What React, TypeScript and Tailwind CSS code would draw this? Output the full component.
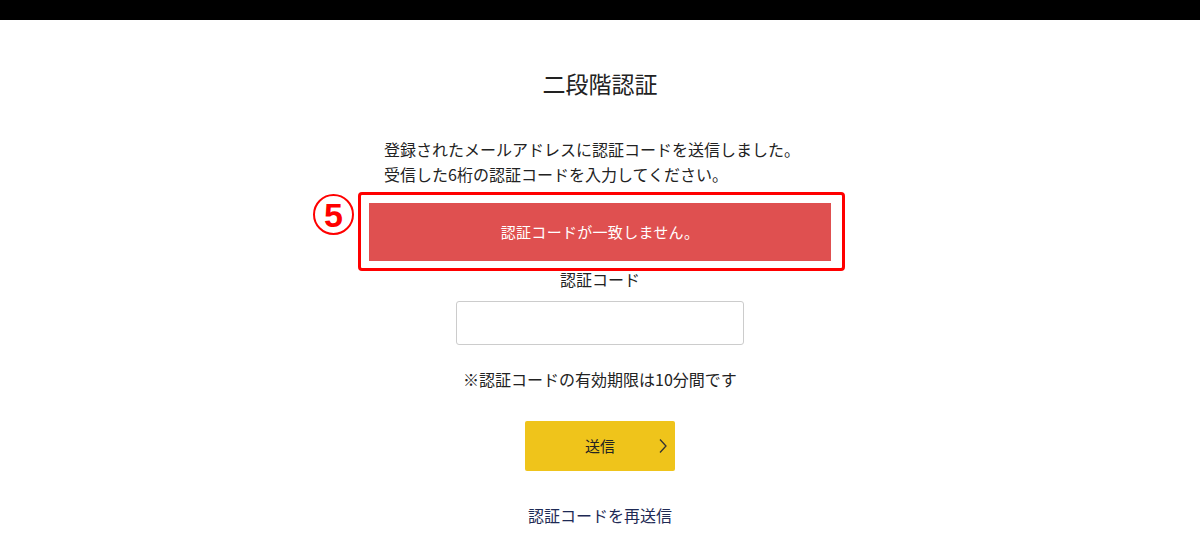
import React from 'react';

const FONT = { fontFamily: '"Noto Sans CJK JP", "Noto Sans", sans-serif' };

export default function App() {
  return (
    <div className="min-h-[560px] bg-white text-[#222]" style={FONT}>
      {/* Header bar */}
      <div className="h-[20px] bg-black" />

      <main className="flex flex-col items-center">
        <h1 className="mt-[47px] text-[23px] leading-[32px] font-normal">二段階認証</h1>

        <div className="w-[462px] mt-[38px] px-[15px] text-[16px] leading-[25px]">
          <p>登録されたメールアドレスに認証コードを送信しました。</p>
          <p>受信した6桁の認証コードを入力してください。</p>
        </div>

        {/* Error message */}
        <div className="relative mt-[16px] w-[462px] h-[58px] bg-[#df5050] flex items-center justify-center">
          <span className="text-white text-[15px] tracking-[0.3px]">認証コードが一致しません。</span>
          {/* annotation */}
          <div className="absolute -top-[11px] -left-[11px] -right-[14px] -bottom-[10px] border-[3px] border-[#ff0000] rounded-[4px]" />
          <div className="absolute -left-[56px] -top-[9px] w-[41px] h-[41px] rounded-full border-2 border-[#ff0000] flex items-center justify-center">
            <span className="text-[#ff0000] text-[34px] font-bold leading-none" style={{ fontFamily: '"Liberation Sans", Arial, sans-serif' }}>5</span>
          </div>
        </div>

        <label className="mt-[6px] text-[16px] leading-[24px]">認証コード</label>
        <input
          type="text"
          className="mt-[10px] w-[288px] h-[44px] border border-[#cccccc] rounded-[3px] px-3 outline-none"
        />

        <p className="mt-[22px] text-[16px] leading-[24px]">※認証コードの有効期限は10分間です</p>

        <button className="relative mt-[30px] w-[150px] h-[50px] bg-[#efc41b] rounded-[2px] flex items-center justify-center text-[15px] text-[#222]">
          送信
          <svg className="absolute right-[7px] top-1/2 -translate-y-1/2" width="10" height="16" viewBox="0 0 10 16" fill="none">
            <path d="M2 1.5L8 8L2 14.5" stroke="#333" strokeWidth="1.3" />
          </svg>
        </button>

        <a href="#" className="mt-[32px] text-[16px] leading-[24px] text-[#1e2a55]">認証コードを再送信</a>
      </main>
    </div>
  );
}
